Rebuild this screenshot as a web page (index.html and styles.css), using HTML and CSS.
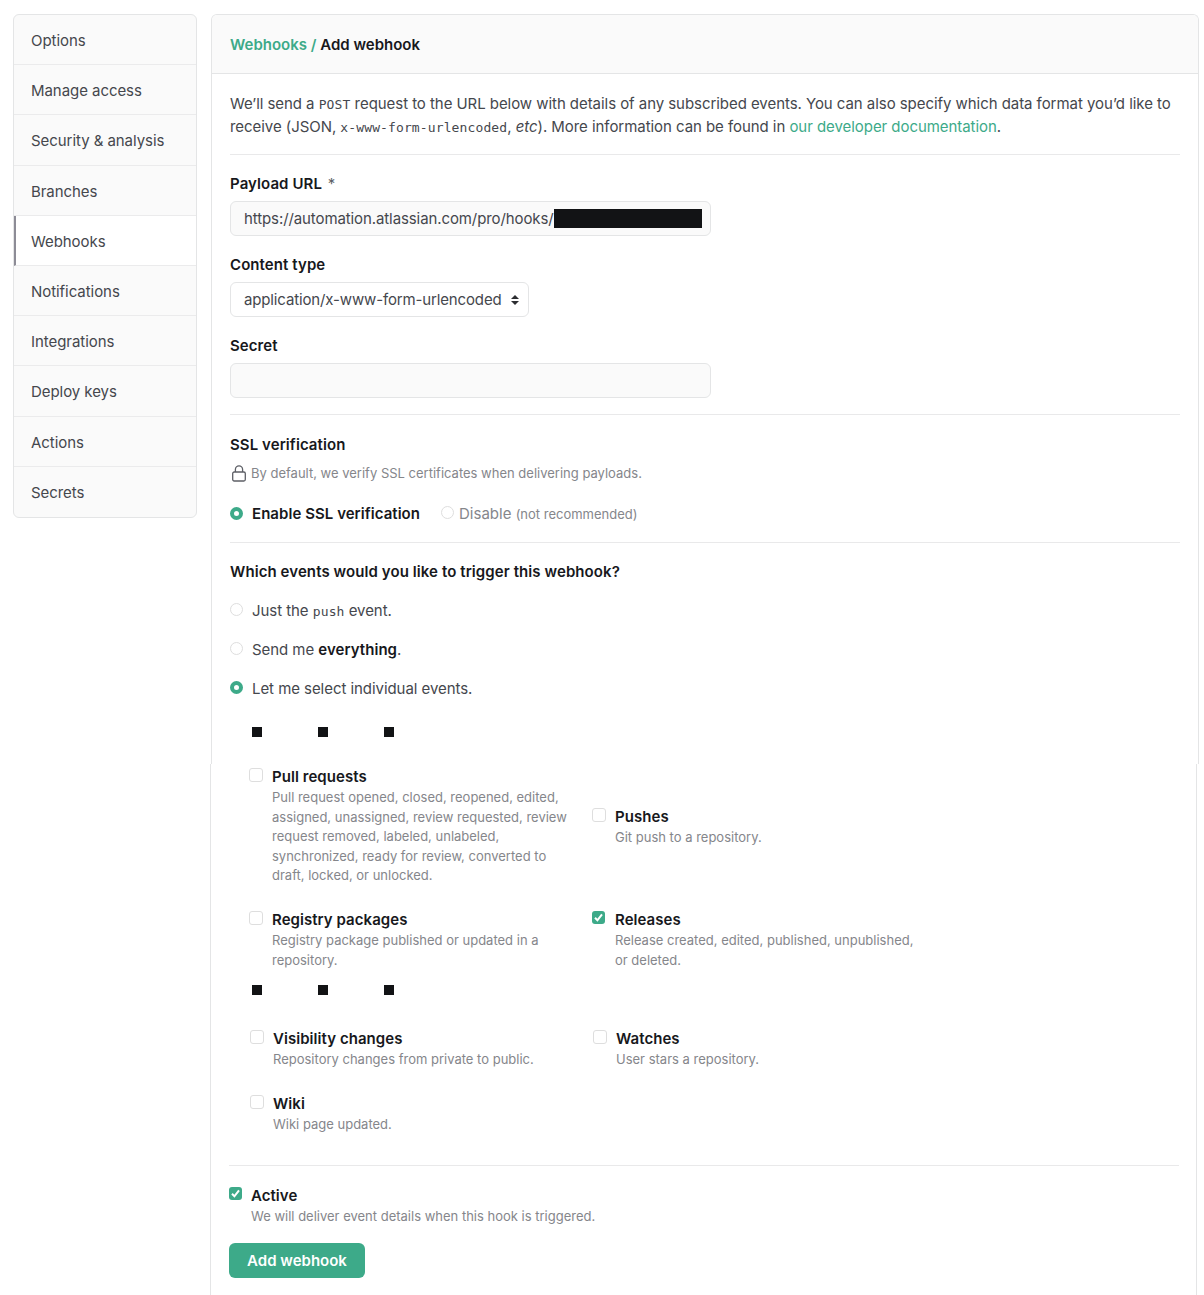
FILE: index.html
```html
<!DOCTYPE html>
<html lang="en">
<head>
<meta charset="utf-8">
<title>Add webhook</title>
<link rel="stylesheet" href="styles.css">
</head>
<body>
<div class="page">
  <nav class="menu">
    <a class="menu-item">Options</a>
    <a class="menu-item">Manage access</a>
    <a class="menu-item">Security &amp; analysis</a>
    <a class="menu-item">Branches</a>
    <a class="menu-item selected">Webhooks</a>
    <a class="menu-item">Notifications</a>
    <a class="menu-item">Integrations</a>
    <a class="menu-item">Deploy keys</a>
    <a class="menu-item">Actions</a>
    <a class="menu-item">Secrets</a>
  </nav>
  <main class="content">
    <section class="panel panel-top">
      <h2 class="panel-header"><span><a class="link">Webhooks /</a> Add webhook</span></h2>
      <div class="panel-body">
        <p class="intro">We’ll send a <code>POST</code> request to the URL below with details of any subscribed events. You can also specify which data format you’d like to<br>receive (JSON, <code>x-www-form-urlencoded</code>, <em>etc</em>). More information can be found in <a class="link">our developer documentation</a>.</p>
        <hr>
        <div class="field">
          <label class="label">Payload URL <span class="required">*</span></label>
          <div class="input">https://automation.atlassian.com/pro/hooks/<i class="redacted"></i></div>
        </div>
        <div class="field">
          <label class="label">Content type</label>
          <div class="input select">application/x-www-form-urlencoded
            <svg class="arrows" viewBox="0 0 8 10" width="8" height="10"><path d="M4 0 8 4H0zM4 10 0 6h8z"/></svg>
          </div>
        </div>
        <div class="field">
          <label class="label">Secret</label>
          <div class="input"></div>
        </div>
        <hr>
        <h3 class="label ssl-title">SSL verification</h3>
        <p class="note ssl-note">
          <svg class="lock" viewBox="0 0 14 17" width="14" height="17"><rect x=".7" y="7" width="12.6" height="9" rx="1.5"/><path d="M3.400 7V4.400a3.600 3.600 0 0 1 7.200 0V7"/></svg>
          By default, we verify SSL certificates when delivering payloads.
        </p>
        <div class="ssl-options">
          <label class="option strong"><i class="radio on"></i>Enable SSL verification</label>
          <label class="option disable"><i class="radio"></i><span>Disable <small>(not recommended)</small></span></label>
        </div>
        <hr>
        <h3 class="label events-title">Which events would you like to trigger this webhook?</h3>
        <label class="option event-option"><i class="radio"></i><span>Just the <code>push</code> event.</span></label>
        <label class="option event-option"><i class="radio"></i><span>Send me <b>everything</b>.</span></label>
        <label class="option event-option"><i class="radio on"></i><span>Let me select individual events.</span></label>
        <div class="dots dots-first"><i></i><i></i><i></i></div>
      </div>
    </section>
    <section class="panel panel-bottom">
      <div class="events">
        <div class="event">
          <i class="check"></i>
          <div><b class="name">Pull requests</b><p class="note">Pull request opened, closed, reopened, edited,<br>assigned, unassigned, review requested, review<br>request removed, labeled, unlabeled,<br>synchronized, ready for review, converted to<br>draft, locked, or unlocked.</p></div>
        </div>
        <div class="event lowered">
          <i class="check"></i>
          <div><b class="name">Pushes</b><p class="note">Git push to a repository.</p></div>
        </div>
        <div class="event">
          <i class="check"></i>
          <div><b class="name">Registry packages</b><p class="note">Registry package published or updated in a<br>repository.</p></div>
        </div>
        <div class="event">
          <i class="check on"><svg viewBox="0 0 13 13" width="13" height="13"><path d="M3 6.800 5.400 9.300 10 3.300"/></svg></i>
          <div><b class="name">Releases</b><p class="note">Release created, edited, published, unpublished,<br>or deleted.</p></div>
        </div>
      </div>
      <div class="dots"><i></i><i></i><i></i></div>
      <div class="events events-more">
        <div class="event">
          <i class="check"></i>
          <div><b class="name">Visibility changes</b><p class="note">Repository changes from private to public.</p></div>
        </div>
        <div class="event">
          <i class="check"></i>
          <div><b class="name">Watches</b><p class="note">User stars a repository.</p></div>
        </div>
        <div class="event">
          <i class="check"></i>
          <div><b class="name">Wiki</b><p class="note">Wiki page updated.</p></div>
        </div>
      </div>
      <hr>
      <div class="event active">
        <i class="check on"><svg viewBox="0 0 13 13" width="13" height="13"><path d="M3 6.800 5.400 9.300 10 3.300"/></svg></i>
        <div><b class="name">Active</b><p class="note">We will deliver event details when this hook is triggered.</p></div>
      </div>
      <button class="submit">Add webhook</button>
    </section>
  </main>
</div>
</body>
</html>
```
FILE: styles.css
```css
* { box-sizing: border-box; }

body {
  margin: 0;
  background: #fff;
  color: #45474d;
  font: 15px/23px Inter, "Liberation Sans", sans-serif;
  letter-spacing: -.055px;
}

h2, h3, p { margin: 0; font-size: inherit; }

.page {
  display: flex;
  align-items: flex-start;
  height: 1295px;
  padding: 14px 0 0 13px;
  overflow: hidden;
}

.menu {
  flex: none;
  width: 184px;
  margin-right: 14px;
  border: 1px solid #e4e5e6;
  border-radius: 6px;
  background: #fafafa;
  overflow: hidden;
}

.menu-item {
  display: flex;
  align-items: center;
  height: 50.200px;
  padding: 2px 0 0 17px;
  border-bottom: 1px solid #ebebec;
}

.menu-item:last-child { border-bottom: 0; }

.menu-item.selected {
  padding-left: 15px;
  border-left: 2px solid #8d8c96;
  background: #fff;
}

.link { color: #3daa89; }

.panel { width: 988px; border: 1px solid #e4e5e6; }

.panel-top {
  height: 750px;
  border-bottom: 0;
  border-radius: 6px 6px 0 0;
}

.panel-header {
  display: flex;
  align-items: center;
  height: 59px;
  padding: 0 18px;
  border-bottom: 1px solid #e4e5e6;
  border-radius: 5px 5px 0 0;
  background: #fafafa;
  color: #17181c;
  font-weight: 600;
  letter-spacing: 0;
}

.panel-body { padding: 18px 18px 0; }

.intro { white-space: nowrap; }

code {
  font-family: "DejaVu Sans Mono", monospace;
  font-size: 13px;
  letter-spacing: .120px;
  line-height: 1;
}

hr {
  height: 1px;
  margin: 0;
  border: 0;
  background: #e9e9ea;
}

.intro + hr { margin-top: 16px; }

.label {
  display: block;
  color: #17181c;
  font-weight: 600;
  letter-spacing: .085px;
}

.required { margin-left: 2px; color: #5d5f66; font-weight: 400; }

.field { padding-top: 17px; height: 81px; }
.field + hr { margin-top: 16px; }

.input {
  display: flex;
  align-items: center;
  width: 481px;
  height: 35px;
  margin-top: 6px;
  padding-left: 13px;
  border: 1px solid #e4e5e6;
  border-radius: 6px;
  background: #fafafa;
  letter-spacing: -.100px;
}

.redacted { width: 148px; height: 19px; background: #121315; }

.select { width: 299px; background: #fff; letter-spacing: -.140px; }

.arrows { margin-left: 9px; fill: #2c2d31; }

.lock {
  fill: none;
  stroke: #5d5f66;
  stroke-width: 1.300;
}

.ssl-title { margin-top: 18px; }

.note {
  color: #85868b;
  font-size: 13px;
  letter-spacing: 0;
  line-height: 19.600px;
  white-space: nowrap;
}

.ssl-note {
  display: flex;
  align-items: center;
  gap: 5px;
  margin-top: 8px;
  padding-left: 2px;
}

.ssl-options { display: flex; gap: 21px; margin: 18px 0 16px; }

.option { display: flex; align-items: center; gap: 9px; }

.strong, b { color: #17181c; font-weight: 600; letter-spacing: .050px; }

.disable { gap: 5px; color: #85868b; letter-spacing: 0; }

small { font-size: 13px; }

.radio {
  width: 13px;
  height: 13px;
  border: 1px solid #dedede;
  border-radius: 50%;
}

.radio.on { border: 4px solid #3daa89; }

.events-title { margin: 17px 0 16px; }

.event-option { margin-bottom: 16.300px; }
.event-option .radio, .disable .radio { margin-bottom: 2px; }

.dots { display: flex; gap: 56px; }
.dots i { width: 10px; height: 10px; background: #121315; }
.dots-first { margin: 27px 0 0 22px; }

.panel-bottom {
  width: 987px;
  height: 540px;
  margin-left: -1px;
  padding: 2px 17px 0 18px;
  border-top: 0;
  border-bottom: 0;
}

.events {
  display: grid;
  grid-template-columns: 343px 343px;
  padding-left: 20px;
  row-gap: 23px;
}

.event { display: flex; gap: 9px; }

.name { display: block; line-height: 22px; }

.check {
  flex: none;
  width: 14px;
  height: 14px;
  margin-top: 2px;
  border: 1px solid #dedede;
  border-radius: 3px;
}

.check.on {
  width: 13px;
  height: 13px;
  margin-right: 1px;
  border: 0;
  background: #3daa89;
}

.check svg {
  display: block;
  fill: none;
  stroke: #fff;
  stroke-width: 2;
}

.lowered { padding-top: 39.500px; }

.panel-bottom .dots { margin: 15px 0 0 23px; }

.events-more { margin-top: 33px; padding-left: 21px; }

.panel-bottom hr { margin-top: 31px; }

.active { margin-top: 19px; gap: 8px; }

.submit {
  width: 136px;
  height: 35px;
  margin-top: 16px;
  padding: 0;
  border: 0;
  border-radius: 6px;
  background: #3daa89;
  color: #fff;
  font: inherit;
  font-weight: 600;
  letter-spacing: 0;
}
```
